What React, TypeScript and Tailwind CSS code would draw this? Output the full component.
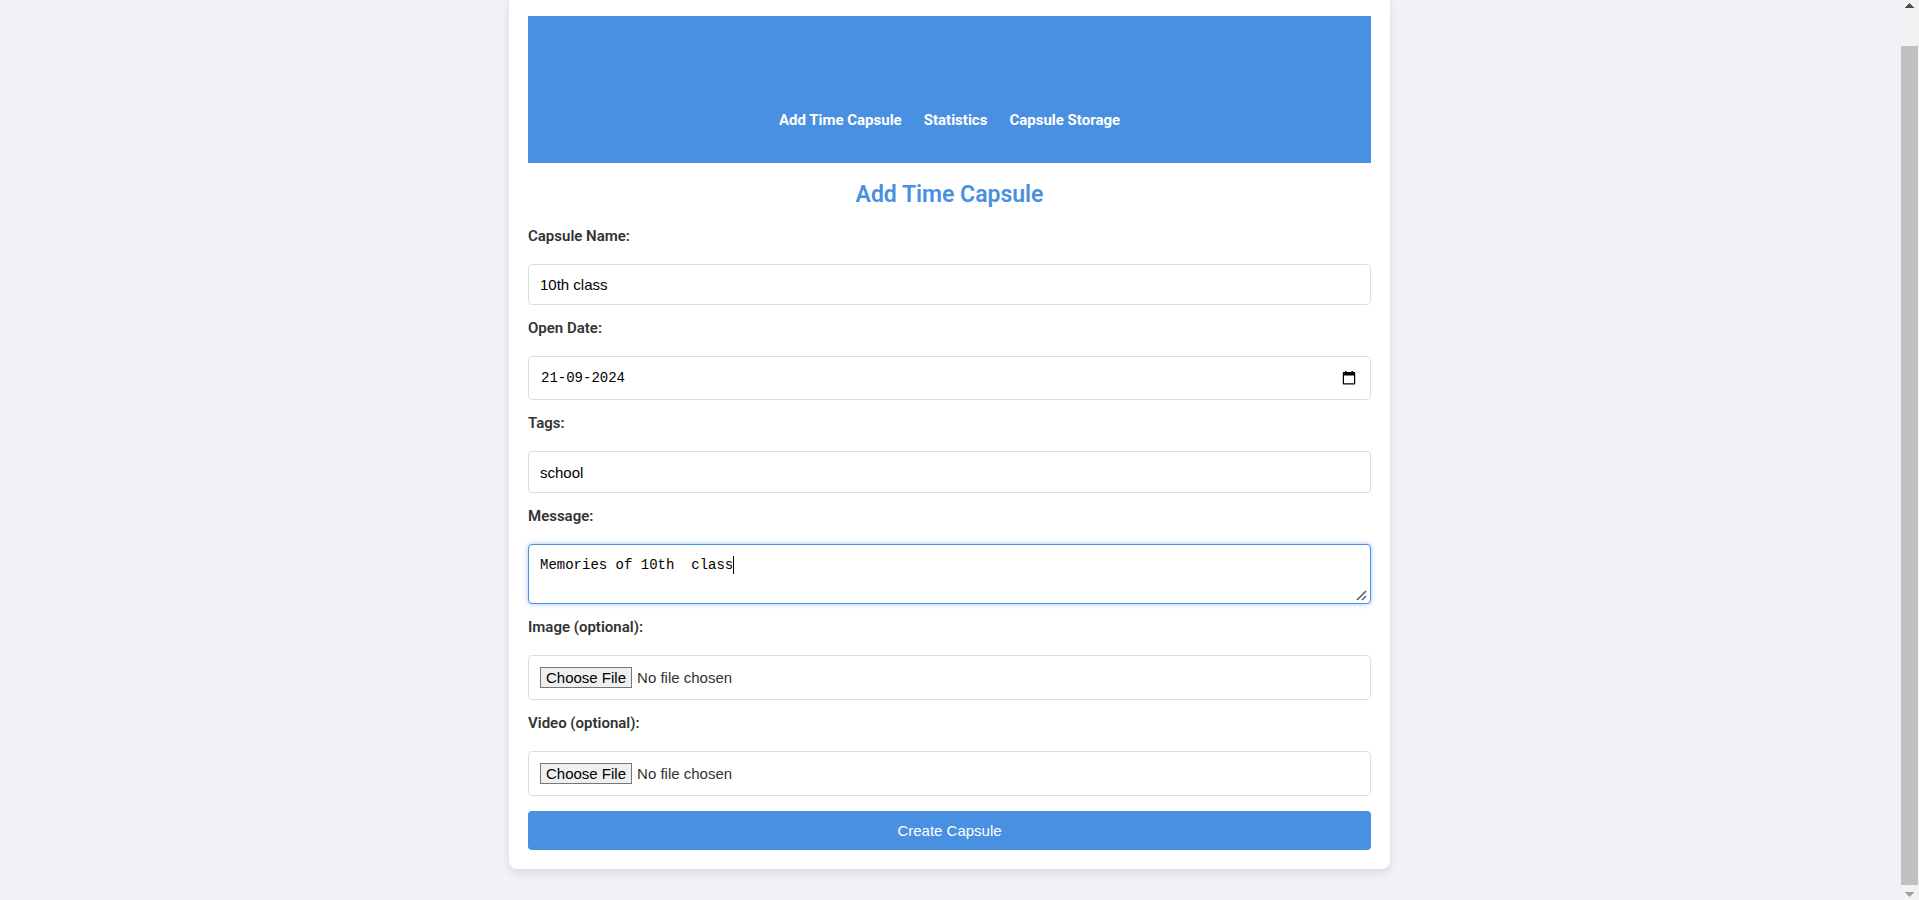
import type { ReactNode } from "react";

const fieldBox =
  "block w-full rounded border border-[#dddddd] bg-white px-[11px] text-[15px] text-black outline-none";
const sans = "font-['Liberation_Sans',Arial,sans-serif]";
const mono = "font-['Liberation_Mono',Consolas,monospace]";

function Field({ id, label, children }: { id: string; label: string; children: ReactNode }) {
  return (
    <div className="mb-3">
      <label htmlFor={id} className="mb-4 block text-[15px] leading-[23px] font-semibold text-[#333333]">
        {label}
      </label>
      {children}
    </div>
  );
}

function FileField({ id, label }: { id: string; label: string }) {
  return (
    <Field id={id} label={label}>
      <input
        id={id}
        type="file"
        className={`block h-[45px] w-full rounded border border-[#dddddd] bg-white px-[11px] py-[11px] text-[15px] leading-[19px] text-[#333333] file:mr-[5px] file:border file:border-solid file:border-[#767676] file:bg-[#efefef] file:px-[5px] file:py-0 file:text-black ${sans}`}
      />
    </Field>
  );
}

function Scrollbar() {
  return (
    <div aria-hidden="true" className="flex w-5 shrink-0 flex-col items-end bg-[#f1f2f4] pr-px">
      <div className="flex h-[46px] w-[17px] justify-center pt-[3px]">
        <svg width="9" height="5" viewBox="0 0 9 5" fill="#505050" shapeRendering="crispEdges">
          <path d="M4 0h1v1h1v1h1v1h1v1h1v1H0V4h1V3h1V2h1V1h1z" />
        </svg>
      </div>
      <div className="w-[17px] grow bg-[#c1c1c1]" />
      <div className="flex h-[15px] w-[17px] items-start justify-center pt-[7px]">
        <svg width="9" height="5" viewBox="0 0 9 5" fill="#a0a0a0" shapeRendering="crispEdges">
          <path d="M0 0h9v1H8v1H7v1H6v1H5v1H4V4H3V3H2V2H1V1H0z" />
        </svg>
      </div>
    </div>
  );
}

export default function App() {
  return (
    <div className="flex min-h-screen overflow-hidden bg-[#f0f2f5] font-[Roboto,sans-serif]">
      <div className="min-w-0 grow px-4">
        <main className="mx-auto -mt-1 w-full max-w-[881px] rounded-lg bg-white px-[19px] pt-5 pb-[19px] shadow-[0_4px_8px_rgba(0,0,0,0.1)]">
          <header className="flex h-[147px] items-end justify-center bg-[#4a90e2] pb-[31px]">
            <nav className="flex gap-[22px] text-[15px] leading-[23px] font-bold text-white">
              <a href="#add">Add Time Capsule</a>
              <a href="#statistics">Statistics</a>
              <a href="#storage">Capsule Storage</a>
            </nav>
          </header>

          <h1 className="pt-[17px] pb-[15px] text-center text-[23px] leading-[30px] font-semibold text-[#4a90e2]">
            Add Time Capsule
          </h1>

          <form onSubmit={(e) => e.preventDefault()}>
            <Field id="name" label="Capsule Name:">
              <input id="name" type="text" defaultValue="10th class" className={`${fieldBox} h-[41px] ${sans}`} />
            </Field>

            <Field id="date" label="Open Date:">
              <div className="flex h-11 items-center rounded border border-[#dddddd] bg-white pr-[14px] pl-3">
                <input
                  id="date"
                  type="text"
                  defaultValue="21-09-2024"
                  className={`min-w-0 grow bg-transparent text-[14px] text-black outline-none ${mono}`}
                />
                <button type="button" aria-label="Pick a date">
                  <svg width="14" height="14" viewBox="0 0 14 14" className="block">
                    <path
                      d="M3 0h1.5v1h5V0H11v1h1.5a.7.7 0 0 1 .7.7v11.1a.7.7 0 0 1-.7.7h-11a.7.7 0 0 1-.7-.7V1.700a.7.7 0 0 1 .7-.7H3zM2 4.500V12.300h10V4.500z"
                      fill="#000000"
                      fillRule="evenodd"
                    />
                  </svg>
                </button>
              </div>
            </Field>

            <Field id="tags" label="Tags:">
              <input id="tags" type="text" defaultValue="school" className={`${fieldBox} h-[42px] ${sans}`} />
            </Field>

            <Field id="message" label="Message:">
              <div className="relative">
                <textarea
                  id="message"
                  rows={2}
                  defaultValue="Memories of 10th  class"
                  className={`block h-[60px] w-full resize-y rounded border border-[#4a90e2] bg-white px-[11px] py-[11px] text-[14px] leading-[18px] text-black shadow-[0_0_5px_rgba(74,144,226,0.5)] outline-none ${mono}`}
                />
                <span aria-hidden="true" className="absolute top-3 left-[205px] h-[18px] w-px bg-black" />
                <svg
                  aria-hidden="true"
                  width="14"
                  height="14"
                  viewBox="0 0 14 14"
                  className="pointer-events-none absolute right-0.5 bottom-0.5 bg-white"
                >
                  <path d="M2 12l9-9M7 12l4-4" fill="none" stroke="#555555" strokeWidth="1.5" />
                </svg>
              </div>
            </Field>

            <FileField id="image" label="Image (optional):" />
            <FileField id="video" label="Video (optional):" />

            <button
              type="submit"
              className={`mt-[15px] block h-[39px] w-full rounded bg-[#4a90e2] pt-px text-[15px] text-white ${sans}`}
            >
              Create Capsule
            </button>
          </form>
        </main>
      </div>
      <Scrollbar />
    </div>
  );
}
